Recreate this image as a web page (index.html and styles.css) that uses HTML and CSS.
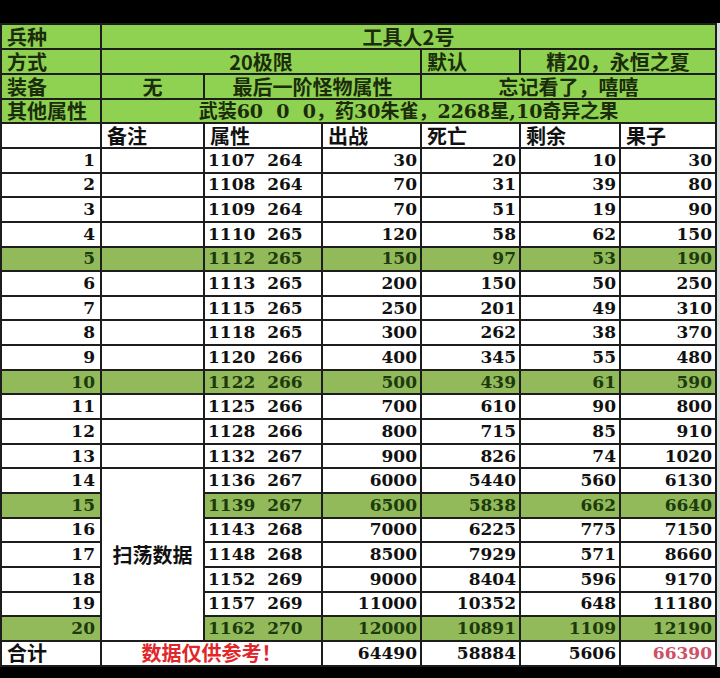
FILE: index.html
```html
<!DOCTYPE html>
<html lang="zh">
<head>
<meta charset="utf-8">
<title>工具人2号</title>
<link rel="stylesheet" href="styles.css">
</head>
<body>
<div class="page">
  <div class="sheet">
    <div class="c g l">兵种</div>
    <div class="c g ctr s6">工具人2号</div>

    <div class="c g l">方式</div>
    <div class="c g ctr s3">20极限</div>
    <div class="c g l">默认</div>
    <div class="c g ctr s2">精20，永恒之夏</div>

    <div class="c g l">装备</div>
    <div class="c g ctr">无</div>
    <div class="c g ctr s2">最后一阶怪物属性</div>
    <div class="c g ctr s3">忘记看了，嘻嘻</div>

    <div class="c g l">其他属性</div>
    <div class="c g ctr s6 mix">武装60&nbsp;&nbsp;0&nbsp;&nbsp;0，药30朱雀，2268星,10奇异之果</div>

    <div class="c"></div>
    <div class="c l">备注</div>
    <div class="c l">属性</div>
    <div class="c l">出战</div>
    <div class="c l">死亡</div>
    <div class="c l">剩余</div>
    <div class="c l">果子</div>

    <div class="c n first">1</div><div class="c"></div><div class="c a">1107  264</div><div class="c n">30</div><div class="c n">20</div><div class="c n">10</div><div class="c n">30</div>
    <div class="c n first">2</div><div class="c"></div><div class="c a">1108  264</div><div class="c n">70</div><div class="c n">31</div><div class="c n">39</div><div class="c n">80</div>
    <div class="c n first">3</div><div class="c"></div><div class="c a">1109  264</div><div class="c n">70</div><div class="c n">51</div><div class="c n">19</div><div class="c n">90</div>
    <div class="c n first">4</div><div class="c"></div><div class="c a">1110  265</div><div class="c n">120</div><div class="c n">58</div><div class="c n">62</div><div class="c n">150</div>
    <div class="c r n first">5</div><div class="c r"></div><div class="c r a">1112  265</div><div class="c r n">150</div><div class="c r n">97</div><div class="c r n">53</div><div class="c r n">190</div>
    <div class="c n first">6</div><div class="c"></div><div class="c a">1113  265</div><div class="c n">200</div><div class="c n">150</div><div class="c n">50</div><div class="c n">250</div>
    <div class="c n first">7</div><div class="c"></div><div class="c a">1115  265</div><div class="c n">250</div><div class="c n">201</div><div class="c n">49</div><div class="c n">310</div>
    <div class="c n first">8</div><div class="c"></div><div class="c a">1118  265</div><div class="c n">300</div><div class="c n">262</div><div class="c n">38</div><div class="c n">370</div>
    <div class="c n first">9</div><div class="c"></div><div class="c a">1120  266</div><div class="c n">400</div><div class="c n">345</div><div class="c n">55</div><div class="c n">480</div>
    <div class="c r n first">10</div><div class="c r"></div><div class="c r a">1122  266</div><div class="c r n">500</div><div class="c r n">439</div><div class="c r n">61</div><div class="c r n">590</div>
    <div class="c n first">11</div><div class="c"></div><div class="c a">1125  266</div><div class="c n">700</div><div class="c n">610</div><div class="c n">90</div><div class="c n">800</div>
    <div class="c n first">12</div><div class="c"></div><div class="c a">1128  266</div><div class="c n">800</div><div class="c n">715</div><div class="c n">85</div><div class="c n">910</div>
    <div class="c n first">13</div><div class="c"></div><div class="c a">1132  267</div><div class="c n">900</div><div class="c n">826</div><div class="c n">74</div><div class="c n">1020</div>
    <div class="c n first">14</div><div class="c ctr merged">扫荡数据</div><div class="c a">1136  267</div><div class="c n">6000</div><div class="c n">5440</div><div class="c n">560</div><div class="c n">6130</div>
    <div class="c r n first">15</div><div class="c r a">1139  267</div><div class="c r n">6500</div><div class="c r n">5838</div><div class="c r n">662</div><div class="c r n">6640</div>
    <div class="c n first">16</div><div class="c a">1143  268</div><div class="c n">7000</div><div class="c n">6225</div><div class="c n">775</div><div class="c n">7150</div>
    <div class="c n first">17</div><div class="c a">1148  268</div><div class="c n">8500</div><div class="c n">7929</div><div class="c n">571</div><div class="c n">8660</div>
    <div class="c n first">18</div><div class="c a">1152  269</div><div class="c n">9000</div><div class="c n">8404</div><div class="c n">596</div><div class="c n">9170</div>
    <div class="c n first">19</div><div class="c a">1157  269</div><div class="c n">11000</div><div class="c n">10352</div><div class="c n">648</div><div class="c n">11180</div>
    <div class="c r n first">20</div><div class="c r a">1162  270</div><div class="c r n">12000</div><div class="c r n">10891</div><div class="c r n">1109</div><div class="c r n">12190</div>

    <div class="c l">合计</div>
    <div class="c ctr s2 note">数据仅供参考！</div>
    <div class="c n">64490</div>
    <div class="c n">58884</div>
    <div class="c n">5606</div>
    <div class="c n pink">66390</div>
  </div>
  <div class="edge"></div>
</div>
</body>
</html>
```

FILE: styles.css
```css
html, body {
  margin: 0;
  padding: 0;
  background: #000;
}

.page {
  display: flex;
  align-items: flex-start;
  padding-top: 23px;
  width: 720px;
  height: 655px;
}

.sheet {
  display: grid;
  grid-template-columns: 98px 101px 116px 97px 97px 98px 94px;
  grid-template-rows: 23px 23px 23px 22px 23px repeat(20, 22.65px) 23px;
  gap: 2px;
  padding: 2px;
  background: #1d1d1d;
  width: 717px;
  box-sizing: border-box;
  font-family: "DejaVu Serif", "Noto Sans CJK SC", serif;
  font-weight: bold;
  font-size: 17px;
  color: #111;
}

.edge {
  flex: 1;
  height: 644px;
  background: #dcdcdc;
}

.c {
  background: #fff;
  display: flex;
  align-items: center;
  line-height: 1;
  white-space: pre;
  font-family: "DejaVu Serif", "Noto Sans CJK SC", serif;
  font-size: 17px;
}

.c.l,
.c.g,
.c.ctr,
.c.note {
  font-family: "Noto Sans CJK SC", sans-serif;
  font-size: 20px;
}

.c.mix {
  font-family: "DejaVu Serif", "Noto Sans CJK SC", serif;
  font-size: 19px;
}

.g {
  background: #8fd150;
  color: #1b2c0c;
}

.r {
  background: #93ba5a;
  color: #1c3a0d;
}

.l {
  justify-content: flex-start;
  padding-left: 5px;
}

.ctr {
  justify-content: center;
}

.n {
  justify-content: flex-end;
  padding-right: 3px;
}

.n.first {
  padding-right: 5px;
}

.a {
  justify-content: flex-start;
  padding-left: 3px;
}

.s2 { grid-column: span 2; }
.s3 { grid-column: span 3; }
.s6 { grid-column: span 6; }

.merged {
  grid-row: span 7;
  background: #fff;
  color: #111;
}

.note {
  color: #e2262a;
}

.pink {
  color: #cf5066;
}
```
